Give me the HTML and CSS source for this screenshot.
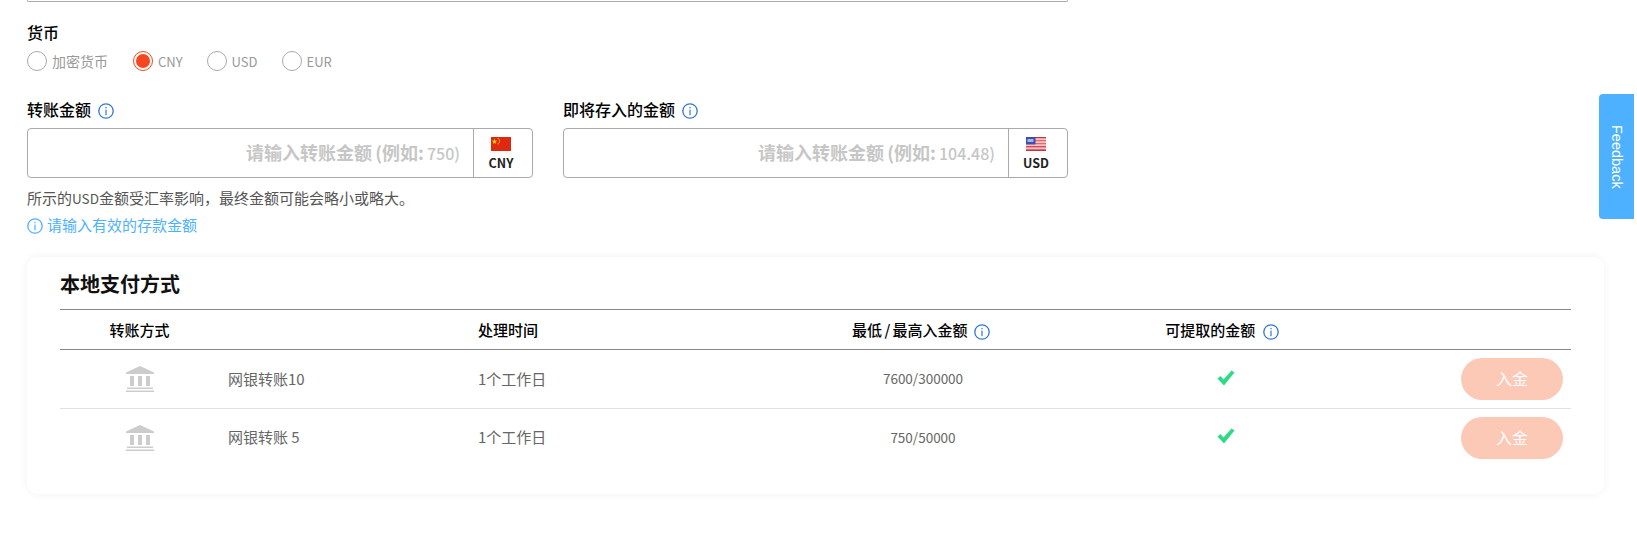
FILE: index.html
```html
<!DOCTYPE html>
<html lang="zh-CN">
<head>
<meta charset="utf-8">
<title>入金</title>
<link rel="stylesheet" href="styles.css">
</head>
<body>
<svg class="defs" width="0" height="0" aria-hidden="true">
  <symbol id="info" viewBox="0 0 16 16">
    <circle cx="8" cy="8" r="7.2" fill="none" stroke="currentColor" stroke-width="1.3"/>
    <rect x="7.4" y="6.6" width="1.2" height="5.6" fill="currentColor"/>
    <rect x="7.4" y="3.9" width="1.2" height="1.4" fill="currentColor"/>
  </symbol>
  <symbol id="bank" viewBox="0 0 30 26">
    <path d="M15 0 L29 6.5 V8 H1 V6.5 Z" fill="#cccccc"/>
    <rect x="5" y="10" width="4" height="10" fill="#cccccc"/>
    <rect x="13" y="10" width="4" height="10" fill="#cccccc"/>
    <rect x="21" y="10" width="4" height="10" fill="#cccccc"/>
    <rect x="2" y="21.5" width="26" height="1.5" fill="#cccccc"/>
    <rect x="1" y="24.5" width="28" height="1.5" fill="#cccccc"/>
  </symbol>
  <symbol id="check" viewBox="0 0 18 16">
    <path d="M0.5 8.5 L3.5 6 L6.5 9.5 L14.5 0.5 L17.5 2.5 L7 15.5 Z" fill="#2bdc84"/>
  </symbol>
</svg>

<main class="page">
  <div class="cut-box"></div>

  <section class="currency">
    <h3 class="label">货币</h3>
    <div class="radios">
      <label class="radio first"><span class="dot"></span>加密货币</label>
      <label class="radio latin"><span class="dot on"></span>CNY</label>
      <label class="radio latin"><span class="dot"></span>USD</label>
      <label class="radio latin"><span class="dot"></span>EUR</label>
    </div>
  </section>

  <section class="amounts">
    <div class="field">
      <h3 class="label">转账金额 <svg class="info"><use href="#info"/></svg></h3>
      <div class="input">
        <span class="placeholder">请输入转账金额 (例如: <span class="num">750)</span></span>
        <div class="unit">
          <svg class="flag" viewBox="0 0 20 14">
            <rect width="20" height="14" fill="#de2910"/>
            <path d="M3.5 1.6 L4.2 3.7 L6.2 3.7 L4.6 4.9 L5.2 6.9 L3.5 5.7 L1.8 6.9 L2.4 4.9 L0.8 3.7 L2.8 3.7 Z" fill="#ffde00"/>
            <circle cx="7.2" cy="1.6" r=".6" fill="#ffde00"/>
            <circle cx="8.4" cy="3.2" r=".6" fill="#ffde00"/>
            <circle cx="8.4" cy="5.2" r=".6" fill="#ffde00"/>
            <circle cx="7.2" cy="6.8" r=".6" fill="#ffde00"/>
          </svg>
          <b>CNY</b>
        </div>
      </div>
    </div>
    <div class="field">
      <h3 class="label">即将存入的金额 <svg class="info"><use href="#info"/></svg></h3>
      <div class="input">
        <span class="placeholder">请输入转账金额 (例如: <span class="num">104.48)</span></span>
        <div class="unit">
          <svg class="flag" viewBox="0 0 20 14">
            <rect width="20" height="14" fill="#f4c2c2"/>
            <rect y="0" width="20" height="1.2" fill="#c8343c"/>
            <rect y="3.2" width="20" height="1" fill="#d9545c"/>
            <rect y="6.2" width="20" height="1" fill="#d9545c"/>
            <rect y="9.2" width="20" height="1.1" fill="#c8343c"/>
            <rect y="12.4" width="20" height="1.6" fill="#c8343c"/>
            <rect width="9.5" height="7.4" fill="#3a4fb0"/>
            <rect x="1.5" y="2" width="6" height="3" fill="#aab4e0"/>
          </svg>
          <b>USD</b>
        </div>
      </div>
    </div>
  </section>

  <p class="hint">所示的<span class="hint-latin">USD</span>金额受汇率影响，最终金额可能会略小或略大。</p>
  <p class="notice"><svg class="info small"><use href="#info"/></svg>请输入有效的存款金额</p>

  <section class="card">
    <h2 class="card-title">本地支付方式</h2>
    <div class="table">
      <div class="row head">
        <div class="c-method">转账方式</div>
        <div></div>
        <div class="c-left">处理时间</div>
        <div class="c-center tight">最低 / 最高入金额 <svg class="info"><use href="#info"/></svg></div>
        <div class="c-center shift">可提取的金额 <svg class="info"><use href="#info"/></svg></div>
        <div></div>
      </div>
      <div class="row item">
        <div class="c-method"><svg class="bank"><use href="#bank"/></svg></div>
        <div class="c-name">网银转账10</div>
        <div class="c-left">1个工作日</div>
        <div class="c-center small-text">7600/300000</div>
        <div class="c-center"><svg class="check"><use href="#check"/></svg></div>
        <div class="c-action"><button class="btn">入金</button></div>
      </div>
      <div class="row item last">
        <div class="c-method"><svg class="bank"><use href="#bank"/></svg></div>
        <div class="c-name">网银转账 5</div>
        <div class="c-left">1个工作日</div>
        <div class="c-center small-text">750/50000</div>
        <div class="c-center"><svg class="check"><use href="#check"/></svg></div>
        <div class="c-action"><button class="btn">入金</button></div>
      </div>
    </div>
  </section>
</main>

<a class="feedback">Feedback</a>
</body>
</html>
```

FILE: styles.css
```css
* { box-sizing: border-box; }
html, body { margin: 0; height: 547px; overflow: hidden; background: #fff; }
body { font-family: "Noto Sans CJK SC", "Noto Sans", sans-serif; color: #000; }
.defs { position: absolute; }

.page { padding-left: 27px; width: 1610px; display: flex; flex-direction: column; }

.cut-box { width: 1041px; height: 2px; border: 1px solid #a9a9b0; border-top: 0; border-radius: 0 0 4px 4px; }

.label { margin: 0; font-size: 16px; line-height: 24px; font-weight: 500; display: flex; align-items: center; gap: 3px; }

.currency { margin-top: 18px; }
.radios { display: flex; gap: 24px; margin-top: 6px; height: 22px; }
.radio { display: flex; align-items: center; gap: 5px; font-size: 14px; color: #999; }
.radio.first { margin-right: 1px; }
.radio.latin { font-size: 13px; }
.dot { width: 20px; height: 20px; border-radius: 50%; border: 1px solid #aaa; display: flex; align-items: center; justify-content: center; }
.dot.on { border-color: #f5461f; }
.dot.on::after { content: ""; width: 14px; height: 14px; border-radius: 50%; background: #f5461f; }

.amounts { display: grid; grid-template-columns: 506px 505px; column-gap: 30px; margin-top: 25px; }
.info { width: 16px; height: 16px; color: #3578d0; flex: none; margin: 3px 0 0 4px; }
.input { margin-top: 7px; height: 50px; border: 1px solid #a9a9b0; border-radius: 4px; display: flex; }
.placeholder { flex: 1; text-align: right; padding-right: 13px; font-size: 18px; line-height: 47px; font-weight: 700; color: #c6c6c6; white-space: nowrap; word-spacing: -1px; }
.num { font-size: 16px; font-weight: 500; }
.unit { width: 59px; border-left: 1px solid #a9a9b0; display: flex; flex-direction: column; align-items: center; padding: 8px 4px 0 0; }
.flag { width: 20px; height: 14px; display: block; }
.unit b { font-size: 12.5px; line-height: 18px; margin-top: 3px; color: #222; }

.hint { margin: 10px 0 0; font-size: 15px; line-height: 20px; color: #555; }
.hint-latin { font-size: 13.5px; }
.notice { margin: 7px 0 0; font-size: 15px; line-height: 20px; color: #4db1ff; display: flex; align-items: center; gap: 4px; }
.info.small { margin: 1px 0 0; color: #4db1ff; width: 16px; height: 16px; }

.card { margin-top: 22px; width: 1577px; height: 237px; padding: 0 33px; border-radius: 10px; background: #fff; box-shadow: 0 0 10px rgba(0,0,0,.06); }
.card-title { margin: 0; height: 52px; font-size: 20px; line-height: 54px; font-weight: 700; color: #111; }

.row { display: grid; grid-template-columns: 162px 256px 295px 300px 306px 192px; align-items: center; border-top: 1px solid #888; }
.head { height: 41px; font-size: 15px; font-weight: 500; border-bottom: 1px solid #888; }
.head .info { margin: 0 0 0 4px; vertical-align: -4px; }
.item { height: 59px; border-top: 0; border-bottom: 1px solid #e2e2e2; font-size: 15px; color: #666; }
.item.last { height: 57px; border-bottom: 0; }

.c-method { text-align: center; }
.head .c-method { padding-right: 3px; }
.item .c-method { padding-right: 2px; }
.c-name { padding-left: 6px; padding-bottom: 2px; }
.item .c-left { padding-bottom: 2px; }
.c-center { text-align: center; }
.c-center.tight { padding-right: 4px; word-spacing: -1px; }
.c-center.shift { padding-right: 8px; }
.small-text { font-size: 13.5px; padding-bottom: 2px; }
.c-action { display: flex; justify-content: flex-end; padding-right: 8px; }

.bank { width: 30px; height: 26px; display: block; margin: 0 auto; }
.check { width: 18px; height: 16px; display: block; margin: 0 auto 3px; }
.btn { width: 102px; height: 42px; border: 0; border-radius: 21px; background: #fdc9b7; color: #fff; font: 16px "Noto Sans CJK SC", sans-serif; padding: 0 0 2px; }

.feedback { position: fixed; left: 1599px; top: 94px; width: 35px; height: 125px; background: #4db1ff; color: #fff; border-radius: 4px 0 0 4px; writing-mode: vertical-rl; font: 14.5px/35px "Liberation Sans", sans-serif; text-align: center; }
```
